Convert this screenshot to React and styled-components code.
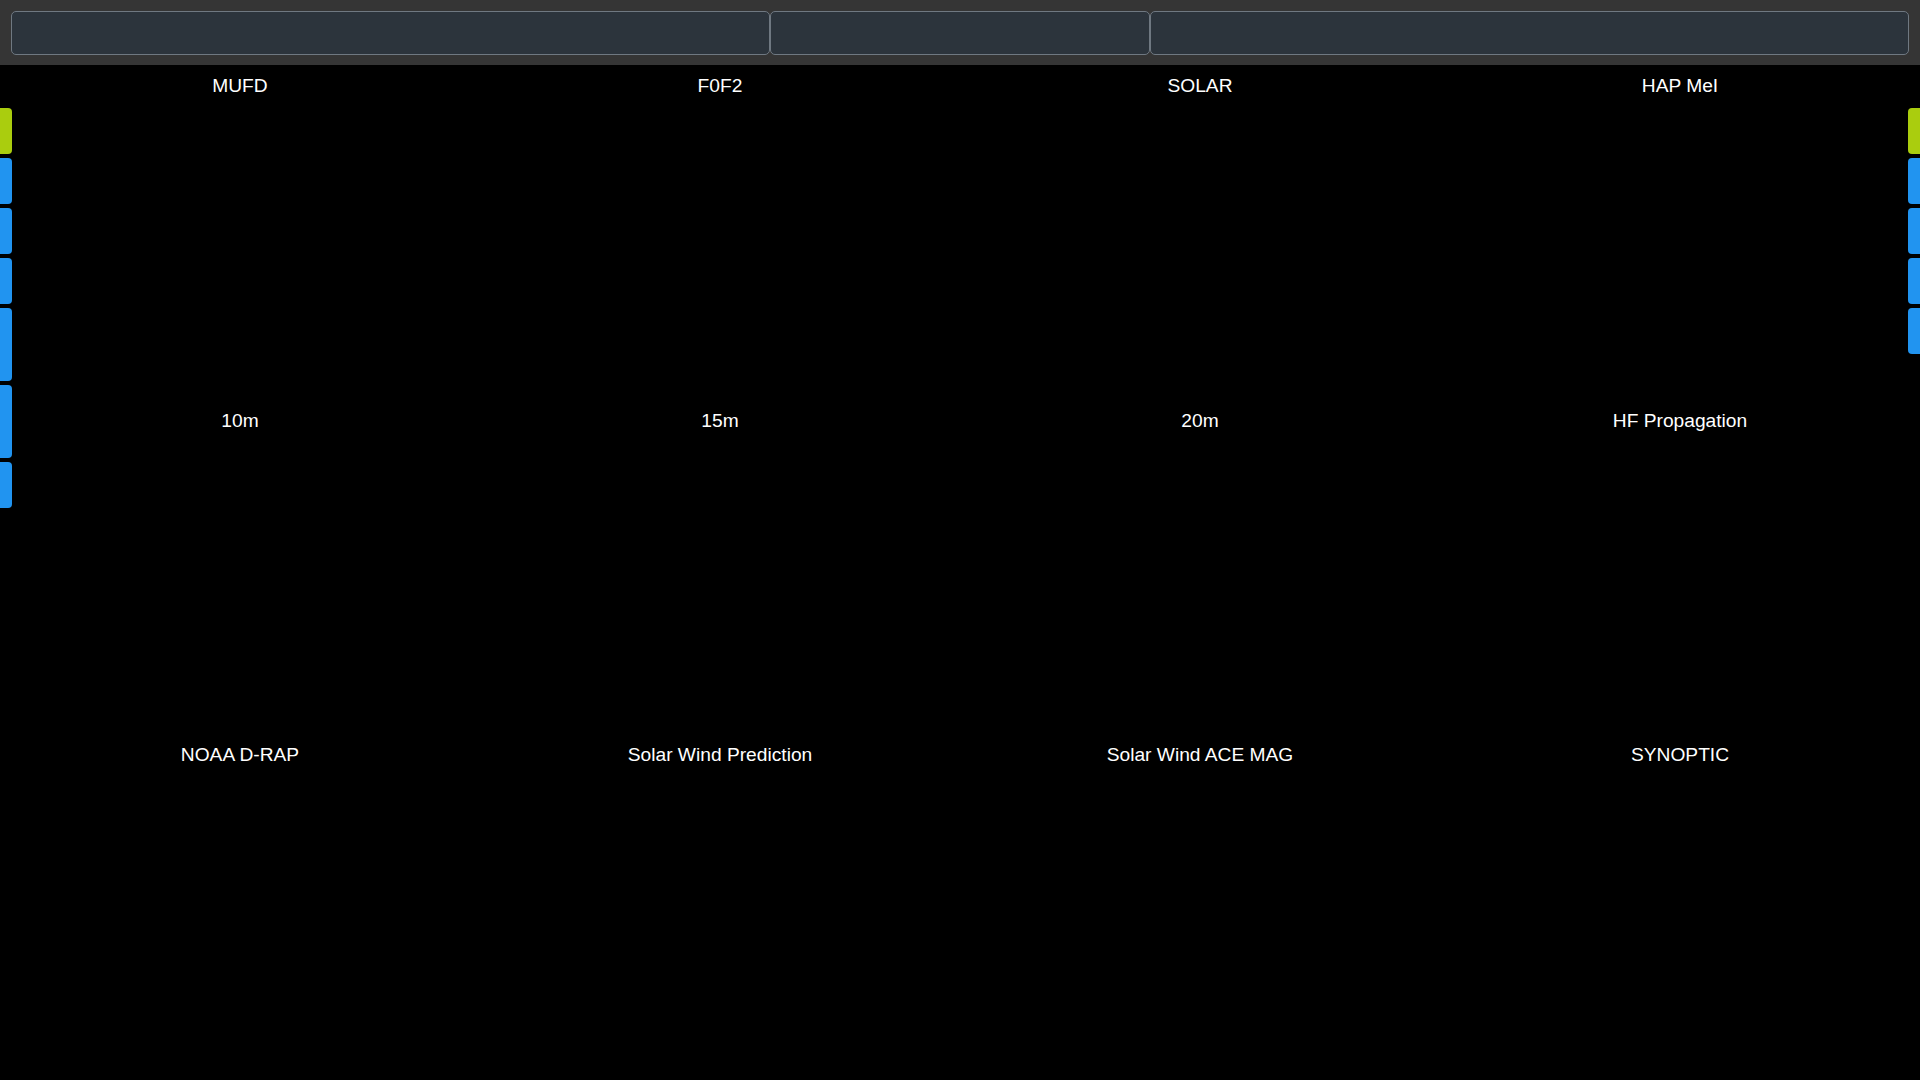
import styled, { createGlobalStyle } from "styled-components";

const GlobalStyle = createGlobalStyle`
  html, body {
    margin: 0;
    padding: 0;
    background: #000;
    overflow: hidden;
  }
  body {
    font-family: "Liberation Sans", Arial, sans-serif;
    color: #fff;
  }
`

const panels = [
  "MUFD", "F0F2", "SOLAR", "HAP MeI",
  "10m", "15m", "20m", "HF Propagation",
  "NOAA D-RAP", "Solar Wind Prediction", "Solar Wind ACE MAG", "SYNOPTIC",
]

const leftTabs = [
  { color: "#aacd0e", h: 46 },
  { color: "#2194f0", h: 46 },
  { color: "#2194f0", h: 46 },
  { color: "#2194f0", h: 46 },
  { color: "#2194f0", h: 73 },
  { color: "#2194f0", h: 73 },
  { color: "#2194f0", h: 46 },
]

const rightTabs = [
  { color: "#aacd0e", h: 46 },
  { color: "#2194f0", h: 46 },
  { color: "#2194f0", h: 46 },
  { color: "#2194f0", h: 46 },
  { color: "#2194f0", h: 46 },
]

function App() {
  return (
    <Page>
      <GlobalStyle />
      <TopBar>
        <Field />
        <Field />
        <Field />
      </TopBar>
      <Board>
        {panels.map((p) => (
          <Panel key={p}>
            <Title>{p}</Title>
          </Panel>
        ))}
      </Board>
      <TabRail side="left">
        {leftTabs.map((t, i) => (
          <Tab key={i} side="left" color={t.color} h={t.h} />
        ))}
      </TabRail>
      <TabRail side="right">
        {rightTabs.map((t, i) => (
          <Tab key={i} side="right" color={t.color} h={t.h} />
        ))}
      </TabRail>
    </Page>
  );
}

export default App;

const Page = styled.div`
  width: 1920px;
  height: 1080px;
  position: relative;
  background: #000;
`

const TopBar = styled.div`
  height: 65px;
  box-sizing: border-box;
  background: #353535;
  padding: 11px 11px 10px 11px;
  display: grid;
  grid-template-columns: 759px 380px 1fr;
`

const Field = styled.div`
  background: #2c343c;
  border: 1px solid #6f7881;
  border-radius: 5px;
`

const Board = styled.div`
  display: grid;
  grid-template-columns: repeat(4, 480px);
  grid-template-rows: repeat(3, 334.5px);
`

const Panel = styled.div`
  display: flex;
  justify-content: center;
  padding-top: 10px;
`

const Title = styled.div`
  font-size: 19.2px;
  color: #fff;
  height: 22px;
`

const TabRail = styled.div`
  position: absolute;
  top: 108px;
  ${({ side }) => (side === "left" ? "left: 0;" : "right: 0;")}
  display: flex;
  flex-direction: column;
  gap: 4px;
`

const Tab = styled.div`
  width: 12px;
  height: ${({ h }) => h}px;
  background: ${({ color }) => color};
  border-radius: ${({ side }) => (side === "left" ? "0 4px 4px 0" : "4px 0 0 4px")};
`
